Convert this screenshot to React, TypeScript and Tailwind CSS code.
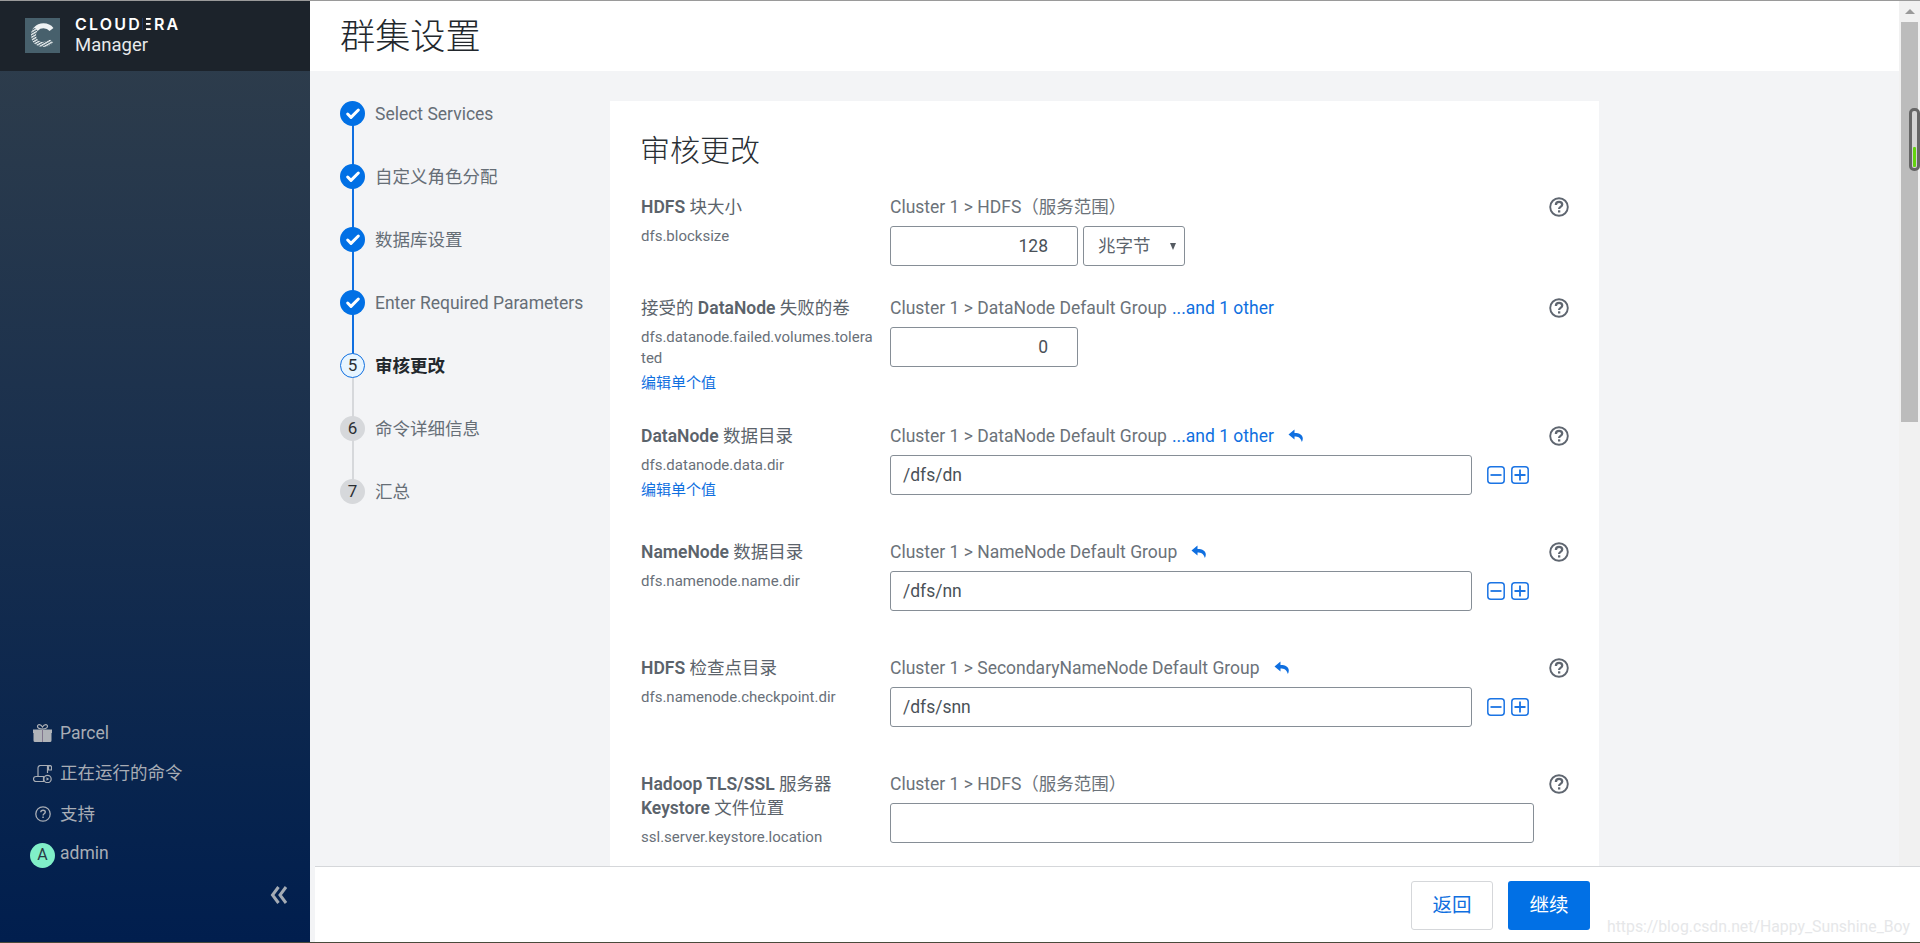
import React from 'react';
import { Check } from 'lucide-react';

const cjk = '"Roboto", "Noto Sans CJK SC", sans-serif';

const steps = [
  { n: 1, label: 'Select Services', done: true },
  { n: 2, label: '自定义角色分配', done: true },
  { n: 3, label: '数据库设置', done: true },
  { n: 4, label: 'Enter Required Parameters', done: true },
  { n: 5, label: '审核更改', active: true },
  { n: 6, label: '命令详细信息' },
  { n: 7, label: '汇总' },
];

const HelpIcon = () => (
  <svg width="20" height="20" viewBox="0 0 20 20" fill="none" className="text-[#5f6670]">
    <circle cx="10" cy="10" r="8.8" stroke="currentColor" strokeWidth="1.9" />
    <path d="M6.900 7.900c0-1.800 1.400-3 3.200-3s3.100 1.100 3.100 2.700c0 2.400-3.100 2.200-3.100 4.300" stroke="currentColor" strokeWidth="2.300" />
    <rect x="9" y="13.300" width="2.300" height="2.200" fill="currentColor" />
  </svg>
);

const UndoIcon = () => (
  <svg width="16" height="14" viewBox="0 0 16 14" fill="#0f6fe0">
    <path d="M6.500 0.500 0.500 5.500l6 5V7.400c3.600 0 6 .7 7.400 5.600.6-1 .9-2.200.9-3.400 0-3.800-3.200-5.700-8.300-5.700z" />
  </svg>
);

const MinusPlus = () => (
  <div className="flex gap-[6px] ml-[15px]">
    <svg width="18" height="18" viewBox="0 0 18 18" fill="none" stroke="#1b74e4" strokeWidth="1.5">
      <rect x="0.8" y="0.8" width="16.400" height="16.400" rx="3" />
      <path d="M3.500 9h11" strokeWidth="1.800" />
    </svg>
    <svg width="18" height="18" viewBox="0 0 18 18" fill="none" stroke="#1b74e4" strokeWidth="1.5">
      <rect x="0.8" y="0.8" width="16.400" height="16.400" rx="3" />
      <path d="M3.500 9h11M9 3.500v11" strokeWidth="1.800" />
    </svg>
  </div>
);

function Row({ h, label, prop, edit, scope, other, undo, children }: {
  h: string;
  label: React.ReactNode;
  prop: string;
  edit?: boolean;
  scope: string;
  other?: boolean;
  undo?: boolean;
  children: React.ReactNode;
}) {
  return (
    <div className={`flex ${h}`}>
      <div className="w-[249px] pr-[16px] shrink-0">
        <div className="text-[17.5px] leading-[24px] text-[#5b636b]">{label}</div>
        <div className="text-[15px] leading-[21px] mt-[7px] text-[#697079] break-all">{prop}</div>
        {edit && <div className="text-[15px] leading-[21px] mt-[4px] text-[#0f6fe0]">编辑单个值</div>}
      </div>
      <div className="flex-1">
        <div className="flex items-center h-[24px] text-[17.5px] text-[#6b7279]">
          <span>{scope}</span>
          {other && <span className="ml-[5px] text-[#0f6fe0]">...and 1 other</span>}
          {undo && <span className="ml-[14px] flex"><UndoIcon /></span>}
        </div>
        <div className="mt-[7px]">{children}</div>
      </div>
      <div className="w-[30px] shrink-0 pt-[2px]"><HelpIcon /></div>
    </div>
  );
}

const TextBox = ({ value = '', w = 'w-[582px]' }: { value?: string; w?: string }) => (
  <div className={`${w} h-[40px] border border-[#868e96] rounded-[3px] bg-white px-[12px] flex items-center text-[17.5px] text-[#4a5158]`}>{value}</div>
);

const NumBox = ({ value }: { value: string }) => (
  <div className="w-[188px] h-[40px] border border-[#868e96] rounded-[3px] bg-white flex items-center justify-end pr-[29px] text-[17.5px] text-[#4a5158]">{value}</div>
);

export default function App() {
  return (
    <div className="flex flex-col w-full h-[943px] overflow-hidden bg-[#f3f4f6] border-t border-b border-t-[#9a9a9a] border-b-[#4a4a3c]" style={{ fontFamily: cjk }}>
      <div className="flex flex-1 min-h-0">
        {/* Sidebar */}
        <aside className="w-[310px] shrink-0 flex flex-col bg-gradient-to-b from-[#303e4b] to-[#011e4e]">
          <div className="h-[70px] bg-[#1c232b] flex items-center pl-[25px] pb-[2px]">
            <div className="w-[35px] h-[35px] bg-[#47606c] flex items-center justify-center">
              <svg width="23" height="24" viewBox="0 0 23 24" fill="none">
                <defs>
                  <pattern id="cStripes" width="2.400" height="2.400" patternUnits="userSpaceOnUse" patternTransform="rotate(-30)">
                    <rect width="2.400" height="1.300" fill="#eef2f3" />
                  </pattern>
                </defs>
                <path d="M20.500 18c-2.500 2.500-5 3.500-8.500 3.500-5.500 0-9.500-4.100-9.500-9.500 0-2.500 1-4.800 2.700-6.500" stroke="url(#cStripes)" strokeWidth="5" />
                <path d="M5 6c1.800-2 4.300-3.200 7.500-3.200 3.500 0 6 1.200 8 3.700" stroke="#eef2f3" strokeWidth="5" />
              </svg>
            </div>
            <div className="ml-[15px] text-white">
              <div className="text-[16px] leading-[20px] font-semibold tracking-[2.200px] flex" style={{ fontFamily: '"Inter", sans-serif' }}>
                CLOUD
                <span className="relative">E<span className="absolute left-[1px] top-[4px] bottom-[4px] w-[2.500px] bg-[#1c232b]" /></span>
                RA
              </div>
              <div className="text-[18.500px] leading-[22px] text-[#e8eaec]">Manager</div>
            </div>
          </div>
          <div className="flex-1" />
          <div className="text-[17.500px] text-[#a8adb5]">
            <div className="flex items-center h-[40px] pl-[33px]">
              <svg width="19" height="18" viewBox="0 0 19 18" fill="#b0b3b8">
                <path d="M0 5.500h19V9h-.5v7.500A1.500 1.500 0 0 1 17 18H2a1.500 1.500 0 0 1-1.500-1.500V9H0z" />
                <path d="M9.500 5.500v12.500" stroke="#7c6f88" strokeWidth="0.900" />
                <path d="M9.500 5C7 5 4.500 4 4.500 2.300 4.500.3 7.500-.3 9.500 3 11.500-.3 14.500.3 14.500 2.300 14.500 4 12 5 9.500 5z" fill="none" stroke="#b0b3b8" strokeWidth="1.200" />
              </svg>
              <span className="ml-[8px]">Parcel</span>
            </div>
            <div className="flex items-center h-[41px] pl-[33px]">
              <svg width="19" height="18" viewBox="0 0 19 18" fill="none" stroke="#a8adb5" strokeWidth="1.200">
                <path d="M5 11.500V3a2.500 2.500 0 0 1 2.500-2.500H16A2 2 0 0 1 18.500 3v2h-3V3A2 2 0 0 1 17 .5" />
                <path d="M14.500 1v7M3 16.500a2.500 2.500 0 0 1 0-5h7.500v5z" />
                <circle cx="14.500" cy="14" r="3.700" />
                <path d="M13.500 12.200l2.700 1.800-2.700 1.800z" fill="#a8adb5" stroke="none" />
              </svg>
              <span className="ml-[8px]">正在运行的命令</span>
            </div>
            <div className="flex items-center h-[40px] pl-[35px]">
              <svg width="16" height="16" viewBox="0 0 16 16" fill="none" stroke="#a8adb5">
                <circle cx="8" cy="8" r="7.200" strokeWidth="1.300" />
                <path d="M5.800 6.300c0-1.300 1-2.100 2.300-2.100s2.200.8 2.200 1.900c0 1.700-2.200 1.700-2.200 3.300" strokeWidth="1.400" />
                <rect x="7.300" y="10.500" width="1.500" height="1.500" fill="#a8adb5" stroke="none" />
              </svg>
              <span className="ml-[9px]">支持</span>
            </div>
            <div className="flex items-center h-[41px] pt-[1px] pl-[30px]">
              <div className="w-[25px] h-[25px] rounded-full bg-[#80efc8] flex items-center justify-center text-[16px] text-[#2b3a44]">A</div>
              <span className="ml-[5px] -mt-[3px]">admin</span>
            </div>
          </div>
          <div className="h-[67px] flex justify-end items-start pr-[22px] pt-[11px]">
            <svg width="18" height="18" viewBox="0 0 18 18" fill="none" stroke="#a4abb4" strokeWidth="3">
              <path d="M8.500 1 2.500 9l6 8M16 1l-6 8 6 8" />
            </svg>
          </div>
        </aside>

        <div className="w-0 flex-1 flex flex-col">
          <div className="flex flex-1 min-h-0">
            {/* Main column */}
            <main className="flex-1 min-w-0 flex flex-col">
              <header className="h-[70px] shrink-0 bg-white pl-[30px] pt-[2px] flex items-center">
                <h1 className="text-[35.200px] font-light text-[#22272c]">群集设置</h1>
              </header>
              <div className="flex flex-1 min-h-0 pt-[30px]">
                {/* Stepper */}
                <ol className="w-[300px] shrink-0 pl-[30px]">
                  {steps.map((s, i) => (
                    <li key={s.n} className="flex h-[63px] relative">
                      {i < steps.length - 1 && (
                        <span className={`absolute left-[11.500px] top-[24px] h-[40px] w-[2px] ${s.done ? 'bg-[#0f6fe0]' : 'bg-[#d6d8db]'}`} />
                      )}
                      {s.done && (
                        <span className="w-[25px] h-[25px] rounded-full bg-[#0170e5] flex items-center justify-center shrink-0 relative">
                          <Check size={16} strokeWidth={4.5} className="text-white" />
                        </span>
                      )}
                      {s.active && (
                        <span className="w-[25px] h-[25px] rounded-full bg-[#e8f5ff] border border-[#0f6fe0] flex items-center justify-center shrink-0 relative text-[17px] text-[#2b2f33]">{s.n}</span>
                      )}
                      {!s.done && !s.active && (
                        <span className="w-[25px] h-[25px] rounded-full bg-[#d6d8db] flex items-center justify-center shrink-0 relative text-[17px] text-[#2b2f33]">{s.n}</span>
                      )}
                      <span className={`ml-[10px] text-[17.500px] leading-[26px] ${s.active ? 'font-bold text-[#23282d]' : 'text-[#666e76]'}`}>{s.label}</span>
                    </li>
                  ))}
                </ol>

                {/* Card */}
                <section className="w-[989px] shrink-0 bg-white pl-[31px] pr-[20px] pt-[31px] overflow-hidden">
                  <h2 className="text-[30px] leading-[38px] font-light text-[#2a2f34] mb-[25px] -ml-[1px]">审核更改</h2>
                  <Row h="h-[101px]" label={<><b className="font-semibold">HDFS</b> 块大小</>} prop="dfs.blocksize" scope="Cluster 1 > HDFS（服务范围）">
                    <div className="flex gap-[5px] mt-[1px]">
                      <NumBox value="128" />
                      <div className="w-[102px] h-[40px] border border-[#868e96] rounded-[3px] bg-white flex items-center justify-between pl-[14px] pr-[8px] text-[17.500px] text-[#5b636b]">
                        <span>兆字节</span>
                        <span className="w-0 h-0 border-l-[3.500px] border-r-[3.500px] border-t-[7px] border-l-transparent border-r-transparent border-t-[#555b62]" />
                      </div>
                    </div>
                  </Row>
                  <Row h="h-[128px]" label={<>接受的 <b className="font-semibold">DataNode</b> 失败的卷</>} prop="dfs.datanode.failed.volumes.tolerated" edit scope="Cluster 1 > DataNode Default Group" other>
                    <NumBox value="0" />
                  </Row>
                  <Row h="h-[116px]" label={<><b className="font-semibold">DataNode</b> 数据目录</>} prop="dfs.datanode.data.dir" edit scope="Cluster 1 > DataNode Default Group" other undo>
                    <div className="flex items-center"><TextBox value="/dfs/dn" /><MinusPlus /></div>
                  </Row>
                  <Row h="h-[116px]" label={<><b className="font-semibold">NameNode</b> 数据目录</>} prop="dfs.namenode.name.dir" scope="Cluster 1 > NameNode Default Group" undo>
                    <div className="flex items-center"><TextBox value="/dfs/nn" /><MinusPlus /></div>
                  </Row>
                  <Row h="h-[116px]" label={<><b className="font-semibold">HDFS</b> 检查点目录</>} prop="dfs.namenode.checkpoint.dir" scope="Cluster 1 > SecondaryNameNode Default Group" undo>
                    <div className="flex items-center"><TextBox value="/dfs/snn" /><MinusPlus /></div>
                  </Row>
                  <Row h="h-[100px]" label={<><b className="font-semibold">Hadoop TLS/SSL</b> 服务器 <b className="font-semibold">Keystore</b> 文件位置</>} prop="ssl.server.keystore.location" scope="Cluster 1 > HDFS（服务范围）">
                    <TextBox w="w-[644px]" />
                  </Row>
                </section>
              </div>
            </main>
            {/* Scrollbar */}
            <div className="w-[21px] shrink-0 bg-[#f1f1f1] flex flex-col pl-[2px] pr-[2px] relative">
              <div className="h-[21px] flex items-center justify-center">
                <span className="w-0 h-0 border-l-[5px] border-r-[5px] border-b-[5px] border-l-transparent border-r-transparent border-b-[#9a9a9a]" />
              </div>
              <div className="h-[400px] bg-[#bcbcbc]" />
              <div className="absolute left-[10px] top-[107px] w-[11px] h-[63px] rounded-[5px] border-[3px] border-[#666] bg-[#d4d4d4] flex items-end justify-center pb-[1px]">
                <span className="w-[3px] h-[20px] bg-[#63d40f] rounded-[1px]" />
              </div>
            </div>
          </div>
          {/* Footer */}
          <footer className="h-[76px] shrink-0 ml-[5px] bg-white border-t border-[#d5d7da] flex items-start pl-[1096px] pt-[14px] gap-[15px] relative">
            <button className="w-[82px] h-[49px] rounded-[3px] border border-[#d5d7da] bg-white text-[19.500px] text-[#0f6fe0]">返回</button>
            <button className="w-[82px] h-[49px] rounded-[3px] bg-[#0170e5] text-[19.500px] text-white">继续</button>
            <span className="absolute right-[10px] top-[48px] text-[15.800px] text-[#e6e7e9]">https://blog.csdn.net/Happy_Sunshine_Boy</span>
          </footer>
        </div>
      </div>
    </div>
  );
}
